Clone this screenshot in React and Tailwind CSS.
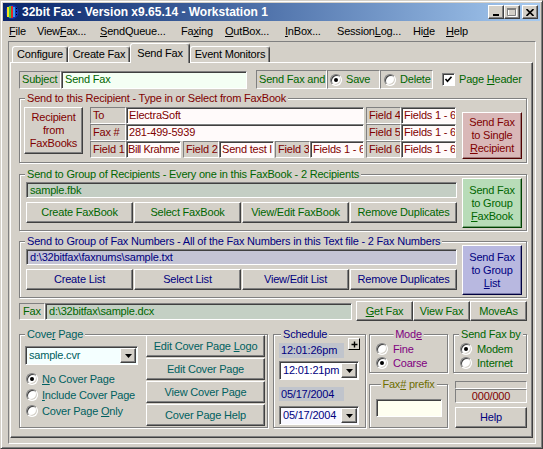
import React from 'react'

const raised = 'border border-t-white border-l-white border-r-[#404040] border-b-[#404040] shadow-[inset_-1px_-1px_0_#808080]'
const sunken = 'border border-t-[#808080] border-l-[#808080] border-r-white border-b-white shadow-[inset_1px_1px_0_#404040]'
const thin = 'border border-t-[#808080] border-l-[#808080] border-r-white border-b-white'
const etched = 'border border-[#808080] shadow-[inset_1px_1px_0_#fff,1px_1px_0_#fff]'

function U({ children }) {
  return <span className="underline underline-offset-[1px]">{children}</span>
}

function Btn({ className = '', children }) {
  return (
    <button type="button" className={`${raised} bg-[#d4d0c8] flex items-center justify-center leading-[13px] whitespace-nowrap ${className}`}>
      {children}
    </button>
  )
}

function Radio({ on }) {
  return (
    <span className="w-[12px] h-[12px] shrink-0 rounded-full bg-white border border-t-[#808080] border-l-[#808080] border-r-white border-b-white shadow-[inset_1px_1px_0_#404040,inset_-1px_-1px_0_#d4d0c8] flex items-center justify-center">
      {on && <span className="w-[4px] h-[4px] rounded-full bg-black" />}
    </span>
  )
}

function Combo({ className = '', text }) {
  return (
    <div className={`${sunken} flex items-stretch p-[1px] pl-[3px] ${className}`}>
      <span className="flex-1 flex items-center whitespace-nowrap overflow-hidden">{text}</span>
      <span className={`${raised} bg-[#d4d0c8] w-[16px] flex items-center justify-center shrink-0`}>
        <svg width="7" height="4" viewBox="0 0 7 4"><path d="M0 0h7L3.5 4z" fill="#000" /></svg>
      </span>
    </div>
  )
}

function Group({ title, center, className = '', titleClass = '', children }) {
  const pos = center ? 'left-1/2 -translate-x-1/2' : 'left-[5px]'
  return (
    <div className={`relative ${etched} ${className}`}>
      <span className={`absolute -top-[8px] ${pos} px-[2px] bg-[#d4d0c8] leading-[14px] whitespace-nowrap ${titleClass}`}>{title}</span>
      {children}
    </div>
  )
}

function AppIcon() {
  return (
    <svg width="16" height="16" viewBox="0 0 16 16" className="shrink-0">
      <ellipse cx="8" cy="8" rx="6.5" ry="7" fill="#1432b4" />
      <rect x="3" y="3" width="2" height="10" fill="#f4e41c" />
      <rect x="5" y="2" width="2" height="12" fill="#3cc83c" />
      <rect x="7" y="2" width="2" height="12" fill="#e02828" />
      <rect x="9" y="3" width="2" height="10" fill="#30a0f0" />
      <rect x="12" y="4" width="1" height="1" fill="#000" />
      <rect x="12" y="7" width="1" height="1" fill="#000" />
      <rect x="12" y="10" width="1" height="1" fill="#000" />
    </svg>
  )
}

function TitleBtn({ children, className = '' }) {
  return (
    <span className={`${raised} bg-[#d4d0c8] w-[16px] h-[14px] flex items-center justify-center ${className}`}>
      {children}
    </span>
  )
}

function Tab({ className = '', children }) {
  return (
    <div className={`h-[16px] bg-[#d4d0c8] border-t border-l border-r border-t-white border-l-white border-r-[#404040] shadow-[inset_-1px_0_0_#808080] rounded-t-[3px] flex items-center justify-center whitespace-nowrap ${className}`}>
      {children}
    </div>
  )
}

const lbl = `${thin} flex items-center pl-[2px] whitespace-nowrap overflow-hidden text-[#800000]`
const inp = `${sunken} bg-[#fffafa] flex items-center pl-[2px] whitespace-nowrap overflow-hidden text-[#800000]`

export default function App() {
  return (
    <div className="w-[543px] h-[449px] bg-[#d4d0c8] font-['Liberation_Sans',Arial,sans-serif] text-[11px] tracking-[-0.2px] text-black border border-t-[#d4d0c8] border-l-[#d4d0c8] border-r-[#404040] border-b-[#404040] shadow-[inset_1px_1px_0_#fff,inset_-1px_-1px_0_#808080] p-[2px] flex flex-col overflow-hidden">
      {/* title bar */}
      <div className="h-[18px] shrink-0 bg-linear-to-r from-[#0a246a] to-[#a6caf0] flex items-center pl-[1px] pr-[2px]">
        <AppIcon />
        <span className="ml-[2px] text-white font-bold text-[12px] tracking-normal whitespace-nowrap">32bit Fax - Version x9.65.14 - Workstation 1</span>
        <div className="ml-auto flex items-center">
          <TitleBtn>
            <svg width="8" height="7" viewBox="0 0 8 7"><rect x="1" y="5" width="6" height="2" fill="#000" /></svg>
          </TitleBtn>
          <TitleBtn>
            <svg width="10" height="9" viewBox="0 0 10 9">
              <path d="M1.5 1.5h8v7h-8z" fill="none" stroke="#fff" />
              <path d="M0.5 0.5h8v7h-8z" fill="none" stroke="#808080" />
              <rect x="0" y="0" width="9" height="2" fill="#808080" />
            </svg>
          </TitleBtn>
          <TitleBtn className="ml-[2px]">
            <svg width="8" height="7" viewBox="0 0 8 7">
              <path d="M0.5 0L7.5 7M7.5 0L0.5 7" stroke="#000" strokeWidth="1.6" />
            </svg>
          </TitleBtn>
        </div>
      </div>

      {/* menu bar */}
      <div className="h-[20px] shrink-0 flex items-center pl-[6px] whitespace-nowrap">
        <span className="w-[28px]"><U>F</U>ile</span>
        <span className="w-[63px]">View<U>F</U>ax...</span>
        <span className="w-[81px]"><U>S</U>endQueue...</span>
        <span className="w-[44px]">Fa<U>x</U>ing</span>
        <span className="w-[60px]"><U>O</U>utBox...</span>
        <span className="w-[52px]"><U>I</U>nBox...</span>
        <span className="w-[76px]">Session<U>L</U>og...</span>
        <span className="w-[33px]">Hi<U>d</U>e</span>
        <span><U>H</U>elp</span>
      </div>

      {/* client frame */}
      <div className={`flex-1 ml-[5px] mr-[4px] mb-[2px] ${thin} pt-[1px] pl-[1px] pr-[1px] flex flex-col`}>
        {/* tabs */}
        <div className="relative z-10 h-[19px] pl-[2px] flex items-end shrink-0">
          <Tab className="w-[56px]">Configure</Tab>
          <Tab className="w-[62px]">Create Fax</Tab>
          <div className="w-[60px] h-[20px] -mb-[1px] bg-[#d4d0c8] border-t border-l border-r border-t-white border-l-white border-r-[#404040] shadow-[inset_-1px_0_0_#808080] rounded-t-[3px] flex items-start justify-center pt-[2px] leading-[14px]">
            Send Fax
          </div>
          <Tab className="w-[80px]">Event Monitors</Tab>
        </div>

        {/* panel */}
        <div className="flex-1 mb-[5px] mr-[1px] border border-t-white border-l-white border-r-[#404040] border-b-[#404040] shadow-[inset_-1px_-1px_0_#808080] pt-[7px] pl-[8px] pr-[5px] flex flex-col">
          {/* subject row */}
          <div className="h-[19px] flex items-center shrink-0 text-[#006600]">
            <div className={`${thin} h-[18px] w-[42px] flex items-center pl-[2px]`}>Subject</div>
            <div className={`${sunken} h-[18px] w-[186px] bg-[#f4fff4] flex items-center pl-[3px]`}>Send Fax</div>
            <div className={`${thin} ml-[9px] h-[19px] w-[71px] flex items-center pl-[2px] whitespace-nowrap`}>Send Fax and</div>
            <div className={`${thin} h-[19px] w-[53px] flex items-center pl-[2px] gap-[4px]`}>
              <Radio on />
              <span>Save</span>
            </div>
            <div className={`${thin} h-[19px] w-[53px] flex items-center pl-[3px] gap-[4px]`}>
              <Radio />
              <span>Delete</span>
            </div>
            <span className={`${sunken} ml-[9px] w-[13px] h-[13px] bg-white flex items-center justify-center`}>
              <svg width="9" height="9" viewBox="0 0 9 9"><path d="M1.5 4l2 2.2L7.5 1.8" fill="none" stroke="#000" strokeWidth="1.7" /></svg>
            </span>
            <span className="ml-[4px] whitespace-nowrap">Page <U>H</U>eader</span>
          </div>

          {/* single recipient */}
          <Group
            title="Send to this Recipient - Type in or Select from FaxBook"
            titleClass="text-[#800000]"
            className="mt-[9px] h-[65px] shrink-0 flex items-start pl-[4px] pt-[8px]"
          >
            <Btn className="w-[59px] h-[47px] text-[#800000]">
              <span>Recipient<br />from<br />FaxBooks</span>
            </Btn>
            <div className="ml-[7px] flex flex-col">
              <div className="flex h-[17px]">
                <div className={`${lbl} w-[36px]`}>To</div>
                <div className={`${inp} w-[238px]`}>ElectraSoft</div>
                <div className={`${lbl} ml-[2px] w-[35px]`}>Field 4</div>
                <div className={`${inp} w-[55px]`}>Fields 1 - 6</div>
              </div>
              <div className="flex h-[17px]">
                <div className={`${lbl} w-[36px]`}>Fax #</div>
                <div className={`${inp} w-[238px]`}>281-499-5939</div>
                <div className={`${lbl} ml-[2px] w-[35px]`}>Field 5</div>
                <div className={`${inp} w-[55px]`}>Fields 1 - 6</div>
              </div>
              <div className="flex h-[17px]">
                <div className={`${lbl} w-[36px]`}>Field 1</div>
                <div className={`${inp} w-[55px] !pl-[1px] tracking-[-0.45px]`}>Bill Krahme</div>
                <div className={`${lbl} ml-[2px] w-[36px]`}>Field 2</div>
                <div className={`${inp} w-[55px]`}>Send test l</div>
                <div className={`${lbl} ml-[1px] w-[35px]`}>Field 3</div>
                <div className={`${inp} w-[54px]`}>Fields 1 - 6</div>
                <div className={`${lbl} ml-[2px] w-[35px]`}>Field 6</div>
                <div className={`${inp} w-[55px]`}>Fields 1 - 6</div>
              </div>
            </div>
            <button type="button" className="ml-[6px] mt-[5px] w-[60px] h-[47px] bg-[#d9b8b8] text-[#800000] leading-[13px] border border-t-white border-l-white border-r-[#500000] border-b-[#500000] shadow-[inset_-1px_-1px_0_#a07878]">
              Send Fax<br />to Single<br /><U>R</U>ecipient
            </button>
          </Group>

          {/* group faxbook */}
          <Group
            title="Send to Group of Recipients - Every one in this FaxBook - 2 Recipients"
            titleClass="text-[#006600]"
            className="mt-[11px] h-[57px] shrink-0 flex items-start pl-[6px]"
          >
            <div className="w-[431px] pt-[7px] flex flex-col text-[#006600]">
              <div className={`${sunken} h-[16px] bg-[#c4cec4] flex items-center pl-[3px]`}>sample.fbk</div>
              <div className="mt-[4px] grid grid-cols-4 gap-[1px] h-[21px]">
                <Btn>Create FaxBook</Btn>
                <Btn>Select FaxBook</Btn>
                <Btn>View/Edit FaxBook</Btn>
                <Btn>Remove Duplicates</Btn>
              </div>
            </div>
            <button type="button" className="ml-[5px] mt-[3px] w-[60px] h-[50px] bg-[#b8dcb8] text-[#006600] leading-[13px] border border-t-white border-l-white border-r-[#004000] border-b-[#004000] shadow-[inset_-1px_-1px_0_#70a070]">
              Send Fax<br />to Group<br /><U>F</U>axBook
            </button>
          </Group>

          {/* group list */}
          <Group
            title="Send to Group of Fax Numbers - All of the Fax Numbers in this Text file - 2 Fax Numbers"
            titleClass="text-[#000080]"
            className="mt-[10px] h-[57px] shrink-0 flex items-start pl-[6px]"
          >
            <div className="w-[431px] pt-[7px] flex flex-col text-[#000080]">
              <div className={`${sunken} h-[16px] bg-[#c4c4d4] flex items-center pl-[3px]`}>{'d:\\32bitfax\\faxnums\\sample.txt'}</div>
              <div className="mt-[4px] grid grid-cols-4 gap-[1px] h-[21px]">
                <Btn>Create List</Btn>
                <Btn>Select List</Btn>
                <Btn>View/Edit List</Btn>
                <Btn>Remove Duplicates</Btn>
              </div>
            </div>
            <button type="button" className="ml-[5px] mt-[3px] w-[60px] h-[50px] bg-[#b8b8e0] text-[#000080] leading-[13px] border border-t-white border-l-white border-r-[#000040] border-b-[#000040] shadow-[inset_-1px_-1px_0_#7878a8]">
              Send Fax<br />to Group<br /><U>L</U>ist
            </button>
          </Group>

          {/* fax file row */}
          <div className="mt-[3px] h-[20px] flex items-center shrink-0 text-[#006600]">
            <div className={`${thin} h-[17px] w-[26px] flex items-center pl-[3px]`}>Fax</div>
            <div className={`${sunken} h-[17px] w-[307px] bg-[#c4d0c4] flex items-center pl-[3px]`}>{'d:\\32bitfax\\sample.dcx'}</div>
            <Btn className="ml-[4px] w-[57px] h-[20px]"><span><U>G</U>et Fax</span></Btn>
            <Btn className="w-[57px] h-[20px]">View Fax</Btn>
            <Btn className="w-[57px] h-[20px]">MoveAs</Btn>
          </div>

          {/* bottom section */}
          <div className="mt-[13px] flex items-start shrink-0">
            <Group title={<>Cove<U>r</U> Page</>} titleClass="text-[#006060]" className="w-[249px] h-[94px] flex text-[#006060]">
              <div className="w-[126px] pl-[5px] pt-[11px] flex flex-col">
                <Combo className="w-[113px] h-[19px] bg-[#f4ffff]" text="sample.cvr" />
                <div className="mt-[6px] flex flex-col">
                  <div className="h-[16px] flex items-center gap-[4px] pl-[1px]">
                    <Radio on />
                    <span><U>N</U>o Cover Page</span>
                  </div>
                  <div className="h-[16px] flex items-center gap-[4px] pl-[1px]">
                    <Radio />
                    <span><U>I</U>nclude Cover Page</span>
                  </div>
                  <div className="h-[16px] flex items-center gap-[4px] pl-[1px]">
                    <Radio />
                    <span>Cover Page <U>O</U>nly</span>
                  </div>
                </div>
              </div>
              <div className="w-[119px] flex flex-col gap-[1px]">
                <Btn className="h-[22px]"><span>Edit Cover Page <U>L</U>ogo</span></Btn>
                <Btn className="h-[22px]">Edit Cover Page</Btn>
                <Btn className="h-[22px]">View Cover Page</Btn>
                <Btn className="h-[22px]">Cover Page Help</Btn>
              </div>
            </Group>

            <Group title="Schedule" titleClass="text-[#000080] left-[7px]" className="ml-[5px] w-[93px] h-[94px] pl-[5px] text-[#000080]">
              <div className="flex items-start">
                <div className="mt-[8px] w-[65px] h-[15px] bg-[#c0c4cc] flex items-center pl-[2px]">12:01:26pm</div>
                <button type="button" className="ml-[4px] mt-[3px] w-[12px] h-[12px] bg-[#d4d0c8] border border-t-white border-l-white border-r-black border-b-black flex items-center justify-center">
                  <svg width="7" height="7" viewBox="0 0 7 7"><path d="M3.5 0.5v6M0.5 3.5h6" stroke="#000" strokeWidth="1.4" /></svg>
                </button>
              </div>
              <Combo className="mt-[3px] w-[80px] h-[19px] bg-white" text="12:01:21pm" />
              <div className="mt-[7px] w-[65px] h-[14px] bg-[#c0c4cc] flex items-center pl-[2px]">05/17/2004</div>
              <Combo className="mt-[5px] w-[80px] h-[19px] bg-[#f8f8ff]" text="05/17/2004" />
            </Group>

            <div className="ml-[3px] w-[79px] flex flex-col">
              <Group title={<>Mod<U>e</U></>} center titleClass="text-[#800080]" className="h-[39px] pl-[6px] pt-[7px] text-[#800080]">
                <div className="h-[14px] flex items-center gap-[5px]">
                  <Radio />
                  <span>Fine</span>
                </div>
                <div className="h-[14px] flex items-center gap-[5px]">
                  <Radio on />
                  <span>Coarse</span>
                </div>
              </Group>
              <Group title={<>Fax<U>#</U> prefix</>} center titleClass="text-[#6e6e00]" className="mt-[11px] h-[44px] pl-[6px] pt-[14px]">
                <div className={`${sunken} w-[66px] h-[18px] bg-[#fffff0]`} />
              </Group>
            </div>

            <div className="ml-[5px] w-[74px] flex flex-col">
              <Group title="Send Fax by" titleClass="text-[#006600]" className="h-[39px] pl-[6px] pt-[7px] text-[#006600]">
                <div className="h-[14px] flex items-center gap-[5px]">
                  <Radio on />
                  <span>Modem</span>
                </div>
                <div className="h-[14px] flex items-center gap-[5px]">
                  <Radio />
                  <span>Internet</span>
                </div>
              </Group>
              <div className="mt-[8px] ml-[2px] w-[72px] flex flex-col">
                <div className={`${thin} h-[8px]`} />
                <div className={`${thin} h-[14px] flex items-center justify-center text-[#800000]`}>000/000</div>
              </div>
              <Btn className="mt-[4px] ml-[2px] w-[72px] h-[21px] text-[#000080]">Help</Btn>
            </div>
          </div>
        </div>
      </div>
    </div>
  )
}
